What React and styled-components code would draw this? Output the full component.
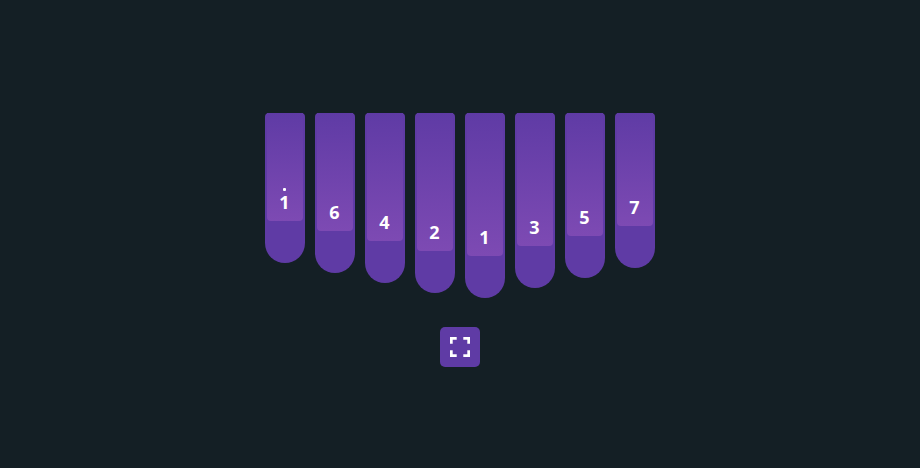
import React from 'react';
import styled, { createGlobalStyle } from 'styled-components';

const GlobalStyle = createGlobalStyle`
  html, body {
    margin: 0;
    height: 100%;
    background: #141f25;
  }
`;

const keys = [
  { note: '1', height: 150, high: true },
  { note: '6', height: 160 },
  { note: '4', height: 170 },
  { note: '2', height: 180 },
  { note: '1', height: 185 },
  { note: '3', height: 175 },
  { note: '5', height: 165 },
  { note: '7', height: 155 },
];

const App = () => {
  return (
    <>
      <GlobalStyle />
      <Page>
        <Kalimba>
          {keys.map((item, i) => (
            <Key key={i} $height={item.height}>
              <KeyFace>
                {item.high && <Dot />}
                <Note>{item.note}</Note>
              </KeyFace>
            </Key>
          ))}
        </Kalimba>
        <FullscreenButton aria-label='fullscreen'>
          <svg width='20' height='20' viewBox='0 0 20 20' fill='none' stroke='#fff' strokeWidth='2.7'>
            <path d='M1.35 6.7V1.35H6.7' />
            <path d='M13.3 1.35H18.65V6.7' />
            <path d='M18.65 13.3V18.65H13.3' />
            <path d='M6.7 18.65H1.35V13.3' />
          </svg>
        </FullscreenButton>
      </Page>
    </>
  );
};

export default App;

const Page = styled.main`
  box-sizing: border-box;
  height: 468px;
  padding-top: 113px;
  display: flex;
  flex-direction: column;
  align-items: center;
  gap: 29px;
`;
const Kalimba = styled.div`
  display: flex;
  align-items: flex-start;
  gap: 10px;
  height: 185px;
`;
const Key = styled.div`
  width: 40px;
  height: ${({ $height }) => $height}px;
  box-sizing: border-box;
  padding: 0 2px;
  background: #5f3ba5;
  border-radius: 4px 4px 20px 20px;
`;
const KeyFace = styled.div`
  height: calc(100% - 42px);
  display: flex;
  flex-direction: column;
  align-items: center;
  justify-content: flex-end;
  padding: 0 1px 7px 0;
  box-sizing: border-box;
  border-radius: 0 0 4px 4px;
  background: linear-gradient(to bottom, #5f3ba5 0, #7d4ab3 100%);
`;
const Dot = styled.span`
  width: 3px;
  height: 3px;
  margin-bottom: -1px;
  background: #fff;
  border-radius: 1px;
`;
const Note = styled.span`
  font-family: 'Open Sans', sans-serif;
  font-size: 18px;
  font-weight: 700;
  line-height: 24px;
  color: #fff;
`;
const FullscreenButton = styled.button`
  width: 40px;
  height: 40px;
  padding: 0;
  border: none;
  border-radius: 5px;
  background: #5f3ba5;
  display: flex;
  align-items: center;
  justify-content: center;
`;
